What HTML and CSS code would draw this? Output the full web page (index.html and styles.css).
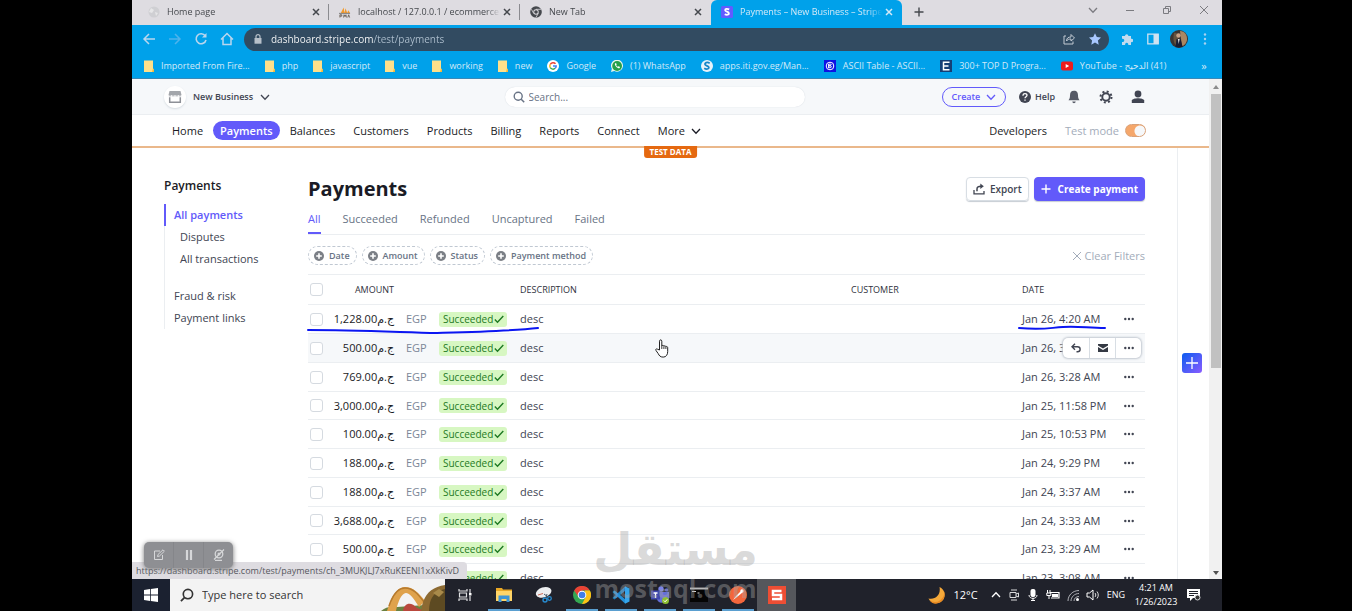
FILE: index.html
```html
<!DOCTYPE html>
<html lang="en">
<head>
<meta charset="utf-8">
<title>Payments – New Business – Stripe</title>
<link rel="stylesheet" href="styles.css">
</head>
<body>
<svg class="sprite" aria-hidden="true">
  <symbol id="x" viewBox="0 0 10 10"><path d="M2 2l6 6M8 2l-6 6" stroke="currentColor" stroke-width="1.5" fill="none"/></symbol>
  <symbol id="chev" viewBox="0 0 10 10"><path d="M1 3l4 4.200L9 3" stroke="currentColor" stroke-width="1.300" fill="none"/></symbol>
  <symbol id="plus" viewBox="0 0 10 10"><path d="M5 .5v9M.5 5h9" stroke="currentColor" stroke-width="1.400" fill="none"/></symbol>
  <symbol id="folder" viewBox="0 0 10 12"><path d="M0 .5h9v8l1 1V12H0z" fill="#ffe08a"/><path d="M9 8.500l1 1V12H8z" fill="#f5b73b"/></symbol>
  <symbol id="addc" viewBox="0 0 10 10"><circle cx="5" cy="5" r="5" fill="#7b7f86"/><path d="M5 2.200v5.600M2.200 5h5.600" stroke="#fff" stroke-width="1.600"/></symbol>
  <symbol id="tick" viewBox="0 0 10 10"><path d="M.8 5.500l2.700 2.700L9.300 2" stroke="currentColor" stroke-width="1.400" fill="none"/></symbol>
  <symbol id="dots" viewBox="0 0 10 4"><g fill="#414552"><circle cx="1.300" cy="2" r="1.200"/><circle cx="5" cy="2" r="1.200"/><circle cx="8.700" cy="2" r="1.200"/></g></symbol>
  <symbol id="mag" viewBox="0 0 12 12"><circle cx="5.200" cy="5.200" r="4" stroke="currentColor" stroke-width="1.400" fill="none"/><path d="M8.200 8.200l3 3" stroke="currentColor" stroke-width="1.500"/></symbol>
</svg>
<div class="screen">
  <header class="tabs">
    <div class="tab"><svg class="i12" viewBox="0 0 12 12"><circle cx="6" cy="6" r="5.500" fill="#cfcfd3"/><path d="M3 2l3 2-2 3-3-1M7 6l3 1-2 3" fill="#e6e6e8"/></svg><span class="title">Home page</span><button class="ic" aria-label="Close tab"><svg class="i10"><use href="#x"/></svg></button></div>
    <div class="tab"><svg class="i12" viewBox="0 0 13 12"><path d="M2 7L5 1l1 6zM6 7l1-5 2 5zM9 7l1-3 2 3z" fill="#f39a2b"/><path d="M0 7.500h12" stroke="#777" /><path d="M1 12V9h2v1.500H1M5 12l.5-3 1 2 1-2 .5 3M9.500 12l1-3 1 3" stroke="#6b6358" fill="none"/></svg><span class="title">localhost / 127.0.0.1 / ecommerce</span><button class="ic" aria-label="Close tab"><svg class="i10"><use href="#x"/></svg></button></div>
    <div class="tab"><svg class="i12" viewBox="0 0 12 12"><circle cx="6" cy="6" r="5.800" fill="#45484d"/><circle cx="6" cy="6" r="2.700" fill="#dedce1"/><circle cx="6" cy="6" r="1.800" fill="#45484d"/><path d="M6 3.300h5M3.700 7.400L1.400 3.200M8.300 7.400L5.800 11.600" stroke="#dedce1" stroke-width=".8"/></svg><span class="title">New Tab</span><button class="ic" aria-label="Close tab"><svg class="i10"><use href="#x"/></svg></button></div>
    <div class="tab active"><svg class="i12" viewBox="0 0 12 12"><rect width="12" height="12" rx="1.500" fill="#635bff"/><path d="M8.200 3.400C6 2.400 4 2.800 4.200 4.300c.2 1.400 3.600 1.300 3.700 2.900.1 1.700-2.200 2-4.200 1" stroke="#fff" stroke-width="1.800" fill="none"/></svg><span class="title">Payments – New Business – Stripe</span><button class="ic" aria-label="Close tab"><svg class="i10"><use href="#x"/></svg></button></div>
    <button class="ic newtab" aria-label="New tab"><svg class="i10"><use href="#plus"/></svg></button>
    <div class="winctl">
      <button class="ic" aria-label="Search tabs"><svg class="i10"><use href="#chev"/></svg></button>
      <button class="ic" aria-label="Minimize"><svg class="i10" viewBox="0 0 10 10"><path d="M1 5.500h8" stroke="currentColor"/></svg></button>
      <button class="ic" aria-label="Restore"><svg class="i10" viewBox="0 0 10 10"><path d="M1.500 3.500h5v5h-5zM3.500 3.500v-2h5v5h-2" stroke="currentColor" fill="none"/></svg></button>
      <button class="ic" aria-label="Close"><svg class="i10" viewBox="0 0 10 10"><path d="M1 1l8 8M9 1L1 9" stroke="currentColor"/></svg></button>
    </div>
  </header>
  <div class="toolbar">
    <button class="ic" aria-label="Back"><svg class="i14" viewBox="0 0 14 14"><path d="M13 7H2M7 2L2 7l5 5" stroke="#b9d6ee" stroke-width="1.500" fill="none"/></svg></button>
    <button class="ic" aria-label="Forward"><svg class="i14" viewBox="0 0 14 14"><path d="M1 7h11M7 2l5 5-5 5" stroke="#4fb3ec" stroke-width="1.500" fill="none"/></svg></button>
    <button class="ic" aria-label="Reload"><svg class="i14" viewBox="0 0 14 14"><path d="M11.200 3.800A5 5 0 1 0 12 8" stroke="#b9d6ee" stroke-width="1.600" fill="none"/><path d="M12.500 1v4.500H8z" fill="#b9d6ee"/></svg></button>
    <button class="ic" aria-label="Home"><svg class="i14" viewBox="0 0 14 14"><path d="M1 7.500L7 1.500l6 6M3 6v6.500h8V6" stroke="#b9d6ee" stroke-width="1.500" fill="none"/></svg></button>
    <div class="omni">
      <svg class="i10" viewBox="0 0 10 10"><rect x="1.500" y="4" width="7" height="5.700" fill="#b7c0c9"/><path d="M3 4V2.600a2 2 0 0 1 4 0V4" stroke="#b7c0c9" stroke-width="1.200" fill="none"/></svg>
      <input class="url" aria-label="Address" value="dashboard.stripe.com/test/payments">
      <button class="ic" aria-label="Share"><svg class="i12" viewBox="0 0 12 12"><path d="M3 3H1v8h9V8.500" stroke="#c2cad2" fill="none"/><path d="M3.500 8C3.500 5 5.500 4 8 4V1.500L11.500 5 8 8V6C6 6 4.500 6.500 3.500 8z" stroke="#c2cad2" fill="none"/></svg></button>
      <button class="ic" aria-label="Bookmark"><svg class="i12" viewBox="0 0 12 12"><path d="M6 .2l1.800 3.900 4.200.5-3.100 2.900.8 4.200L6 9.600l-3.700 2.100.8-4.200L0 4.600l4.200-.5z" fill="#a9c8ff"/></svg></button>
    </div>
    <button class="ic" aria-label="Extensions"><svg class="i12" viewBox="0 0 12 12"><path d="M1 3h3a1.700 1.700 0 1 1 3.400 0H10v2.800a1.700 1.700 0 1 1 0 3.300V12H7.200a1.600 1.600 0 1 0-3 0H1V9a1.700 1.700 0 1 0 0-3.200z" fill="#c4dbee"/></svg></button>
    <button class="ic" aria-label="Side panel"><svg class="i12" viewBox="0 0 12 12"><path d="M.8 1.200h10.400v9.600H.8z" stroke="#cfe2f1" stroke-width="1.300" fill="none"/><path d="M6.500 1h5v10h-5z" fill="#cfe2f1"/></svg></button>
    <button class="ic" aria-label="Profile"><svg class="i18" viewBox="0 0 18 18"><circle cx="9" cy="9" r="9" fill="#3a3431"/><path d="M10 1c5 0 7 4 7 8s-3 7-5 7z" fill="#a98762"/><path d="M4 3c2-1 4 1 4 4l-1 9c-4-2-4-9-3-13z" fill="#65533f"/><circle cx="8.500" cy="5.500" r="2.200" fill="#c9a184"/><path d="M5.500 17l1-8 2 1 2-1 2 7.500c-3 1.300-5 1-7 .5z" fill="#171d33"/><path d="M8 9l.7 5 .9-5z" fill="#eee"/></svg></button>
    <button class="ic" aria-label="Menu"><svg class="i12" viewBox="0 0 12 12"><g fill="#a9d2f0"><circle cx="6" cy="1.500" r="1.200"/><circle cx="6" cy="6" r="1.200"/><circle cx="6" cy="10.500" r="1.200"/></g></svg></button>
  </div>
  <nav class="marks" aria-label="Bookmarks">
    <a href="#"><svg class="fold"><use href="#folder"/></svg>Imported From Fire...</a>
    <a href="#"><svg class="fold"><use href="#folder"/></svg>php</a>
    <a href="#"><svg class="fold"><use href="#folder"/></svg>javascript</a>
    <a href="#"><svg class="fold"><use href="#folder"/></svg>vue</a>
    <a href="#"><svg class="fold"><use href="#folder"/></svg>working</a>
    <a href="#"><svg class="fold"><use href="#folder"/></svg>new</a>
    <a href="#"><svg class="i12" viewBox="0 0 12 12"><circle cx="6" cy="6" r="6" fill="#fff"/><g fill="none" stroke-width="1.500"><path d="M8.500 3.800A3.200 3.200 0 0 0 3.200 4.500" stroke="#ea4335"/><path d="M3.200 4.500a3.200 3.200 0 0 0 0 3" stroke="#fbbc05"/><path d="M3.200 7.500a3.200 3.200 0 0 0 5 .8" stroke="#34a853"/><path d="M8.200 8.300A3 3 0 0 0 9.200 6H6" stroke="#4285f4"/></g></svg>Google</a>
    <a href="#"><svg class="i12" viewBox="0 0 12 12"><path d="M0 12l.9-3.200A6 6 0 1 1 3.300 11z" fill="#e8f6ea"/><circle cx="6.100" cy="6" r="4.900" fill="#25a04b"/><path d="M4 3.500c-.9 1.500 2.500 5.200 4.500 4.800l.6-1.300-1.600-.8-.7.600C6 6.500 5.500 6 5.200 5.200l.5-.7L5 3z" fill="#fff"/></svg>(1) WhatsApp</a>
    <a href="#"><svg class="i12" viewBox="0 0 12 12"><circle cx="6" cy="6" r="6" fill="#e7f2fa"/><path d="M8.700 3.200C6 1.500 3.500 3 4 4.600c.5 1.500 3.800 1.200 3.900 2.900.1 1.500-2.500 2.200-4.700.8" stroke="#1586c8" stroke-width="1.700" fill="none"/></svg>apps.iti.gov.eg/Man...</a>
    <a href="#"><svg class="i12" viewBox="0 0 12 12"><path d="M0 0h12v12H0z" fill="#0d12e4"/><circle cx="6" cy="6" r="3.800" stroke="#fff" fill="none"/><path d="M4.600 4v4M4.600 4.200c4-.5 3 1.500.5 1.600 3 0 3.400 2-.5 2" stroke="#fff" fill="none"/></svg>ASCII Table - ASCII...</a>
    <a href="#"><svg class="i12" viewBox="0 0 12 12"><path d="M0 0h12v12H0z" fill="#153f75"/><path d="M9.500 2.300H3.500v7.400h6M3.500 6h5" stroke="#fff" stroke-width="1.500" fill="none"/></svg>300+ TOP D Progra...</a>
    <a href="#"><svg class="i12" viewBox="0 0 12 12"><rect y="1.500" width="12" height="9" rx="2" fill="#ee1c1c"/><path d="M4.700 4l3.500 2-3.500 2z" fill="#fff"/></svg><span>YouTube - <bdi>الدحيح</bdi> (41)</span></a>
    <button class="ic more" aria-label="More bookmarks">»</button>
  </nav>

  <main class="viewport">
    <div class="page">
      <div class="topbar">
        <button class="biz"><span class="shop"><svg class="i14" viewBox="0 0 14 14"><path d="M1.500 1h11L13.500 5h-13z" fill="#a3a6ab"/><path d="M1.700 7.200v5h10.600v-5" stroke="#8d9097" stroke-width="1.500" fill="none"/><path d="M.8 5.800h12.400" stroke="#a3a6ab" stroke-dasharray="2.500 .8"/></svg></span>New Business<svg class="i10"><use href="#chev"/></svg></button>
        <label class="search"><svg class="i12"><use href="#mag"/></svg><input type="search" placeholder="Search..." aria-label="Search"></label>
        <div class="tools">
          <button class="create">Create<svg class="i10"><use href="#chev"/></svg></button>
          <button class="help"><svg class="i12" viewBox="0 0 12 12"><circle cx="6" cy="6" r="6" fill="#414552"/><path d="M4 4.700c0-3 4-2.500 4-.4C8 5.700 6 5.800 6 7.300M6 8.400v1.400" stroke="#fff" stroke-width="1.300" fill="none"/></svg>Help</button>
          <button class="ic" aria-label="Notifications"><svg class="i14" viewBox="0 0 14 14"><path d="M7 .8c3 0 4 2 4 4.500 0 2.500.5 3.700 1.500 4.900h-11C2.500 9 3 7.800 3 5.300 3 2.800 4 .8 7 .8zM5.300 11.500h3.400C8.500 13.800 5.500 13.800 5.300 11.500z" fill="#565a66"/></svg></button>
          <button class="ic" aria-label="Settings"><svg class="i14" viewBox="0 0 14 14"><circle cx="7" cy="7" r="3.700" stroke="#414552" stroke-width="1.900" fill="none"/><circle cx="7" cy="7" r="5.500" stroke="#414552" stroke-width="2" stroke-dasharray="2 2.320" fill="none"/></svg></button>
          <button class="ic" aria-label="Account"><svg class="i14" viewBox="0 0 14 14"><circle cx="7" cy="4" r="3.400" fill="#414552"/><path d="M.8 13V10.500C1 9 4.500 8.200 7 8.200s6 .8 6.200 2.300V13z" fill="#414552"/></svg></button>
        </div>
      </div>
      <nav class="nav" aria-label="Main">
        <a href="#">Home</a><a href="#" class="on">Payments</a><a href="#">Balances</a><a href="#">Customers</a><a href="#">Products</a><a href="#">Billing</a><a href="#">Reports</a><a href="#">Connect</a><a href="#">More<svg class="i10"><use href="#chev"/></svg></a>
        <a href="#" class="dev">Developers</a>
        <label class="mode">Test mode<input type="checkbox" role="switch" checked></label>
        <span class="testdata">TEST DATA</span>
      </nav>
      <div class="cols">
        <aside class="side">
          <h2>Payments</h2>
          <ul>
            <li class="cur"><a href="#">All payments</a></li>
            <li class="sub"><a href="#">Disputes</a></li>
            <li class="sub"><a href="#">All transactions</a></li>
            <li class="grp"><a href="#">Fraud &amp; risk</a></li>
            <li><a href="#">Payment links</a></li>
          </ul>
        </aside>
        <section class="content">
          <div class="head">
            <h1>Payments</h1>
            <button class="btn"><svg class="i12" viewBox="0 0 12 12"><path d="M1 7v3.800h10V8" stroke="#414552" stroke-width="1.300" fill="none"/><path d="M4 8.200V6c0-2 1.500-2.700 4-2.700" stroke="#414552" stroke-width="1.500" fill="none"/><path d="M7.300.5l3.500 2.800-3.500 2.800z" fill="#414552"/></svg>Export</button>
            <button class="btn primary"><svg class="i10"><use href="#plus"/></svg>Create payment</button>
          </div>
          <div class="subtabs"><a href="#" class="on">All</a><a href="#">Succeeded</a><a href="#">Refunded</a><a href="#">Uncaptured</a><a href="#">Failed</a></div>
          <div class="filters">
            <button class="chip"><svg class="i10"><use href="#addc"/></svg>Date</button>
            <button class="chip"><svg class="i10"><use href="#addc"/></svg>Amount</button>
            <button class="chip"><svg class="i10"><use href="#addc"/></svg>Status</button>
            <button class="chip"><svg class="i10"><use href="#addc"/></svg>Payment method</button>
            <button class="clear"><svg class="i10" viewBox="0 0 10 10"><path d="M1 1l8 8M9 1L1 9" stroke="currentColor"/></svg>Clear Filters</button>
          </div>
          <table>
            <colgroup><col class="c-check"><col class="c-amt"><col class="c-cur"><col class="c-stat"><col><col class="c-cust"><col class="c-date"><col class="c-act"></colgroup>
            <thead><tr><th><input type="checkbox" aria-label="Select all"></th><th class="amt-head">AMOUNT</th><th></th><th></th><th>DESCRIPTION</th><th>CUSTOMER</th><th>DATE</th><th></th></tr></thead>
            <tbody id="rows"></tbody>
          </table>
        </section>
      </div>
      <aside class="rail"><button aria-label="Add"><svg class="i14" viewBox="0 0 14 14"><path d="M7 1v12M1 7h12" stroke="#fff" stroke-width="1.300"/></svg></button></aside>
      <svg class="ink ink-a" viewBox="0 0 232 8"><path d="M1 3C45 3 90 5 130 6 165 5 205 4 231 1" stroke="#0b16f2" stroke-width="2" fill="none" stroke-linecap="round"/></svg>
      <svg class="ink ink-b" viewBox="0 0 88 6"><path d="M1 3C25 5 30 3 45 2 60 1 70 3 87 3" stroke="#0b16f2" stroke-width="2" fill="none" stroke-linecap="round"/></svg>
      <svg class="cursor" viewBox="0 0 14 19"><path d="M4.500 11V2.200c0-1.800 2.300-1.800 2.300 0V7c.3-1 2-.8 2.100.3.400-.8 1.900-.6 2 .5.500-.7 1.800-.3 1.800.8v4c0 3-1.500 5.500-4.500 5.500-3 0-4-1.500-5-3.500L1 11.500c-.8-1.400.8-2.300 1.700-1.200z" fill="#fff" stroke="#222" stroke-width="1"/><path d="M6.800 7v3M8.900 7.500V10M10.900 8v2" stroke="#222" stroke-width=".9"/></svg>
    </div>
    <div class="scroll"><span class="up"></span><span class="thumb"></span><span class="down"></span></div>
    <div class="recorder">
      <button class="ic" aria-label="Draw"><svg class="i12" viewBox="0 0 12 12"><path d="M7 2H1.500v8.500h8V6M4.500 7.500l.5-2L10 .8l1.400 1.400L6.500 7z" stroke="#d6d7d9" fill="none"/></svg></button>
      <button class="ic" aria-label="Pause"><svg class="i12" viewBox="0 0 12 12"><path d="M4 1v10M8 1v10" stroke="#d6d7d9" stroke-width="2.200"/></svg></button>
      <button class="ic" aria-label="Camera off"><svg class="i12" viewBox="0 0 12 12"><circle cx="6" cy="5" r="3.800" stroke="#d6d7d9" stroke-width="1.300" fill="none"/><circle cx="6" cy="5" r="1.500" fill="#d6d7d9"/><path d="M2 11.300h7M1 10.500L11 .5" stroke="#d6d7d9" stroke-width="1.200"/></svg></button>
    </div>
    <div class="status">https://dashboard.stripe.com/test/payments/ch_3MUKJLJ7xRuKEENI1xXkKivD</div>
  </main>

  <footer class="taskbar">
    <button class="start" aria-label="Start"><svg class="i14" viewBox="0 0 14 14"><path d="M0 2l6-.9v5.500H0zM6.800 1L14 0v6.600H6.800zM0 7.400h6v5.500L0 12zM6.800 7.400H14V14l-7.200-1z" fill="#fff"/></svg></button>
    <label class="find"><svg class="i14 flip" viewBox="0 0 12 12"><use href="#mag"/></svg><input placeholder="Type here to search" aria-label="Type here to search">
      <svg class="basket" viewBox="0 0 64 32"><path d="M0 32c4-4 10-5 16-4l28-2 20-2v8z" fill="#6b8140"/><path d="M6 32C10 18 16 8 24 8s14 6 20 14l-6 6c-5-8-9-14-13-14s-8 8-10 18z" fill="#dfa24c"/><path d="M8 27c4-12 9-18 16-18 8 0 13 6 19 14" stroke="#b67a2e" stroke-width="1.500" fill="none"/><path d="M22 32c1-8 8-10 14-3l8 3z" fill="#b9473c"/><path d="M40 32c2-16 10-24 24-26v26z" fill="#8c6a32"/><path d="M48 32c0-12 5-20 16-22v22z" fill="#5d4a22"/><path d="M52 14l6-4 5 3-5 5z" fill="#a98a4a"/></svg></label>
    <div class="apps">
      <button aria-label="Task view"><svg class="i14" viewBox="0 0 14 14"><path d="M1 1v2h8V1M1 13v-2h8v2M1.500 5h7v4h-7zM12 1v4M12 8v5" stroke="#dfe0e2" stroke-width="1.200" fill="none"/><path d="M11 5h2.500v2.500H11z" fill="#fff"/></svg></button>
      <button class="open" aria-label="File Explorer"><svg class="i18" viewBox="0 0 18 18"><path d="M1 2h6l1 1.500h9V15H1z" fill="#e9a825"/><path d="M1 5h16v10H1z" fill="#ffd567"/><path d="M3.500 16V9.500h11V16h-3v-3h-5v3z" fill="#3f95d3"/></svg></button>
      <button aria-label="Snipping Tool"><svg class="i18" viewBox="0 0 18 18"><ellipse cx="9.500" cy="6.500" rx="8" ry="5" fill="#eceef0" transform="rotate(-18 9 6)"/><path d="M4 9l5-1.500" stroke="#d06a57"/><circle cx="11" cy="14" r="2" stroke="#278bd0" stroke-width="1.400" fill="none"/><circle cx="15.500" cy="12.500" r="1.800" stroke="#278bd0" stroke-width="1.300" fill="none"/><path d="M12 12l1-4M14 11L10 8" stroke="#4b5966"/></svg></button>
      <button class="open" aria-label="Chrome"><svg class="i18" viewBox="0 0 20 20"><circle cx="10" cy="10" r="10" fill="#35a852"/><path d="M1.300 5A10 10 0 0 1 18.700 5H10L6 12z" fill="#ea4335"/><path d="M18.700 5A10 10 0 0 1 10 20l4.300-8L13 5z" fill="#fbc116"/><circle cx="10" cy="10" r="4.800" fill="#fff"/><circle cx="10" cy="10" r="3.700" fill="#3f7ee8"/></svg></button>
      <button class="open" aria-label="Visual Studio Code"><svg class="i18" viewBox="0 0 18 18"><path d="M13 .5v4.500L2.500 13.500.5 12z" fill="#1b7fc4"/><path d="M13 17.500V13L2.500 4.500.5 6z" fill="#2490d8"/><path d="M13 .3l4.500 2.200v13L13 17.700z" fill="#35a5ec"/></svg></button>
      <button class="open" aria-label="Teams"><svg class="i18" viewBox="0 0 18 18"><circle cx="10" cy="3" r="2.700" fill="#7b83eb"/><circle cx="15.500" cy="4" r="1.800" fill="#5059c9"/><path d="M6 6h12v6c0 3-3 4-4 3-1 2-7 3-8-2z" fill="#656fd8"/><path d="M0 4.500h9v9H0z" fill="#4048ae"/><path d="M2.500 7h4M4.500 7v5" stroke="#fff" stroke-width="1.300"/><circle cx="14.500" cy="14.500" r="3.500" fill="#8ebf32"/><path d="M12.800 14.500l1.300 1.300 2.200-2.500" stroke="#fff" fill="none"/></svg></button>
      <button class="open" aria-label="Command Prompt"><svg class="i18" viewBox="0 0 18 18"><path d="M0 1.500h18V16H0z" fill="#050505"/><path d="M0 1.500h18v2H0z" fill="#b9babc"/><path d="M2 5.500h4M7.500 7h2" stroke="#d5d5d5"/></svg></button>
      <button class="open" aria-label="Postman"><svg class="i18" viewBox="0 0 18 18"><circle cx="9" cy="9" r="9" fill="#f3663c"/><path d="M4 14l3-4 5-5 1.500 1.500L8 11z" fill="#fff"/><circle cx="13" cy="5" r="1.700" fill="#fff"/></svg></button>
      <button class="front" aria-label="Snagit"><svg class="i18" viewBox="0 0 18 18"><path d="M0 0h18v18H0z" fill="#ee4e34"/><path d="M13.500 5H5v4h8v4H4" stroke="#fff" stroke-width="2.500" fill="none"/></svg></button>
    </div>
    <div class="tray">
      <svg class="i18" viewBox="0 0 18 18"><path d="M11.500 1A8.500 8.500 0 1 1 .5 12.500C8 14 13 8.500 11.500 1z" fill="#f5a93a"/><path d="M15.500 4A9 9 0 0 1 1.500 14C4 19 12 19 15.500 13c1.500-3 1.500-6 0-9z" fill="#e98a22"/></svg>
      <span class="temp">12°C</span>
      <svg class="i10 flipv"><use href="#chev"/></svg>
      <svg class="i12" viewBox="0 0 12 12"><path d="M3 1h6M3 11h6M2 3.500h6v5H2zM8 5l2.500-1v4L8 7" stroke="#d9dadc" fill="none"/></svg>
      <svg class="i12" viewBox="0 0 12 12"><rect x="3.500" width="5" height="8" rx="2" fill="#fff"/><path d="M2 6c0 4.500 8 4.500 8 0M6 9v3M4 11.500h4" stroke="#fff" fill="none"/></svg>
      <svg class="i14" viewBox="0 0 14 14"><path d="M4 4.500h9v5.500H5" stroke="#fff" stroke-width="1.200" fill="none"/><path d="M6 6h6v3H6z" fill="#fff"/><path d="M1.500 2v3M4 2v3M.8 5h4v2.500h-4zM3 8v3" stroke="#fff" fill="none"/></svg>
      <svg class="i12" viewBox="0 0 12 12"><g fill="none" stroke="#aeb0b5"><path d="M1 12C1 6 6 1.500 12 1.500"/><path d="M4 12c0-4 3.500-7.500 8-7.500M7 12c0-2.500 2-4.500 5-4.500"/></g><circle cx="10.500" cy="10.500" r="1.500" fill="#fff"/></svg>
      <svg class="i14" viewBox="0 0 14 14"><path d="M1 5h2.500L7 2v10L3.500 9H1z" stroke="#fff" fill="none"/><path d="M9 5c1 1 1 3 0 4M11 3.500c1.700 2 1.700 5 0 7" stroke="#ddd" fill="none"/></svg>
      <span class="lang">ENG</span>
      <span class="clock"><span>4:21 AM</span><span>1/26/2023</span></span>
      <svg class="i14" viewBox="0 0 14 14"><path d="M0 1h13v9H6l-3 3v-3H0z" fill="#fff"/><path d="M2 3.500h9M2 5.500h9M2 7.500h5" stroke="#20222b"/><circle cx="10.500" cy="9.500" r="2.500" stroke="#d7d8da" fill="#333"/></svg>
    </div>
  </footer>
  <div class="brand"><span class="brand-ar" lang="ar">مستقل</span><span class="brand-en">mostaql.com</span></div>
</div>
<script src="rows.js"></script>
</body>
</html>
```
FILE: styles.css
```css
* { box-sizing: border-box; }
body { margin: 0; background: #000; font: 11px/16px "Open Sans", "Noto Sans", "DejaVu Sans", sans-serif; color: #414552; }
a { color: inherit; text-decoration: none; }
button, input { font: inherit; color: inherit; }
button { border: 0; background: none; padding: 0; display: inline-flex; align-items: center; justify-content: center; white-space: nowrap; }
svg { flex: none; display: block; }
.sprite { display: none; }
.i10 { width: 10px; height: 10px; }
.i12 { width: 12px; height: 12px; }
.i14 { width: 14px; height: 14px; }
.i18 { width: 18px; height: 18px; }
.flip { transform: scaleX(-1); }
.flipv { transform: scaleY(-1); }

.screen { position: relative; margin: 0 130px 0 132px; height: 100vh; display: flex; flex-direction: column; background: #fff; overflow: hidden; }

/* browser chrome */
.tabs { display: flex; height: 25px; padding-left: 6px; background: #dedce1; color: #45484d; }
.tab { flex: 0 1 191px; min-width: 0; display: flex; align-items: center; gap: 7px; padding: 0 7px 2px 10px; border-right: 1px solid transparent; position: relative; }
.tab:nth-child(-n+2)::after { content: ""; position: absolute; right: -1px; top: 4px; height: 16px; width: 1px; background: #8b8b90; }
.title { flex: 1; overflow: hidden; white-space: nowrap; font-size: 9px; -webkit-mask-image: linear-gradient(90deg, #000 90%, transparent); mask-image: linear-gradient(90deg, #000 90%, transparent); }
.tab.active { background: #00a1ea; color: #d3e9f7; border-radius: 6px 6px 0 0; }
.tab .ic { margin-left: -5px; }
.newtab { width: 34px; padding-bottom: 2px; }
.winctl { margin-left: auto; display: flex; color: #7b7b80; }
.winctl .ic { width: 37px; padding-bottom: 6px; }
.toolbar { display: flex; align-items: center; height: 28px; padding: 0 4px; background: #00a1ea; }
.toolbar > .ic { width: 26px; }
.omni { flex: 1; display: flex; align-items: center; height: 23px; margin: 0 5px 0 4px; padding: 0 1px 0 9px; border-radius: 12px; background: #324b61; }
.omni .ic { width: 26px; }
.url { flex: 1; min-width: 0; border: 0; outline: 0; padding: 0 0 0 8px; font-size: 10px; color: #fff; background: linear-gradient(90deg, #fff 110px, #aebfce 110px); -webkit-background-clip: text; background-clip: text; -webkit-text-fill-color: transparent; }
.marks { display: flex; align-items: center; height: 26px; padding: 0 8px 0 12px; gap: 15px; background: #00a1ea; color: #d3e9f7; font-size: 9px; border-bottom: 1px solid #3a89b8; }
.marks a { display: flex; align-items: center; gap: 7px; white-space: nowrap; }
.fold { width: 10px; height: 12px; }
.more { margin-left: auto; width: 20px; font-size: 11px; }

/* dashboard */
.viewport { flex: 1; min-height: 0; position: relative; display: flex; overflow: hidden; }
.page { flex: 1; min-width: 0; position: relative; }
.topbar { display: grid; grid-template-columns: 1fr 300px 1fr; align-items: center; height: 36px; padding: 0 64px 0 32px; background: #f6f8fa; border-bottom: 1px solid #ebeef1; }
.biz { justify-self: start; gap: 7px; font-size: 9px; font-weight: 600; }
.shop { width: 22px; height: 22px; border-radius: 50%; background: #fff; display: grid; place-items: center; box-shadow: 0 1px 2px #d5dbe1; }
.search { display: flex; align-items: center; gap: 4px; height: 20px; padding: 0 8px; border-radius: 10px; background: #fff; color: #687385; box-shadow: 0 0 1px #c9d0d8; }
.search input { border: 0; outline: 0; padding: 0; min-width: 0; flex: 1; background: none; font-size: 10px; }
input::placeholder { color: inherit; opacity: 1; }
.tools { justify-self: end; display: flex; align-items: center; gap: 18px; font-size: 9px; }
.create { height: 20px; width: 64px; gap: 6px; border: 1px solid #625afa; border-radius: 10px; color: #625afa; font-weight: 600; }
.help { gap: 4px; font-weight: 600; margin-left: -5px; margin-right: -6px; }
.nav { position: relative; display: flex; align-items: center; gap: 2px; height: 33px; padding: 0 63px 0 32px; border-bottom: 2px solid #eab88b; color: #1a1b25; }
.nav a { display: flex; align-items: center; gap: 6px; height: 19px; padding: 0 8px; border-radius: 10px; font-weight: 500; }
.nav a.on { background: #625afa; color: #fff; font-weight: 600; font-size: 10px; }
.nav a.on { font-size: 11px; padding: 0 7px; }
.nav .dev { margin-left: auto; }
.mode { display: flex; align-items: center; gap: 6px; padding-left: 8px; color: #a3acba; font-weight: 500; }
.mode input { appearance: none; margin: 0; width: 21px; height: 13px; border-radius: 7px; background: radial-gradient(circle at 14px 6px, #f6f8fa 5px, #f5a76b 6px); border: 1px solid #d9a27a; }
.testdata { position: absolute; left: 50%; top: 31px; transform: translateX(-50%); background: #e56910; color: #fff; font-size: 8px; line-height: 12px; font-weight: 700; padding: 0 6px; border-radius: 0 0 3px 3px; }
.cols { display: grid; grid-template-columns: 144px 1fr; padding: 0 64px 0 32px; }
.side { padding-top: 30px; }
.side h2 { margin: 0 0 10px; font-size: 12px; line-height: 16px; color: #1a1b25; font-weight: 600; }
.side ul { margin: 0 30px 0 0; padding: 0; list-style: none; }
.side li { border-left: 1px solid #ebeef1; padding: 3px 0 3px 9px; }
.side .cur { border-left: 2px solid #625afa; padding-left: 8px; color: #625afa; font-weight: 600; }
.side li.sub { padding-left: 15px; }
.side .grp { padding-top: 18px; }
.content { padding-top: 27px; min-width: 0; }
.head { display: flex; align-items: center; gap: 5px; height: 28px; }
h1 { flex: 1; margin: 0; font-size: 20px; line-height: 28px; color: #1a1b25; font-weight: 700; }
.btn { height: 24px; padding: 0 6px; gap: 5px; border-radius: 4px; border: 1px solid #d8dee4; box-shadow: 0 1px 1px #c6ccd3; font-size: 10px; font-weight: 600; }
.primary { background: #625afa; border-color: #625afa; color: #fff; gap: 7px; font-weight: 700; }
.subtabs { display: flex; gap: 22px; margin-top: 8px; border-bottom: 1px solid #ebeef1; color: #687385; font-weight: 500; }
.subtabs a { padding: 0 0 5px; border-bottom: 2px solid transparent; }
.subtabs .on { color: #625afa; border-color: #625afa; }
.filters { display: flex; gap: 5px; padding: 11px 0 9px; }
.chip { height: 19px; padding: 0 6px 0 5px; gap: 5px; border: 1px dashed #c0c8d2; border-radius: 10px; color: #687385; font-size: 9px; font-weight: 600; }
.clear { margin-left: auto; gap: 3px; color: #a3acba; font-weight: 500; }
table { width: 100%; table-layout: fixed; border-collapse: collapse; border-top: 1px solid #ebeef1; }
.c-check { width: 18px; } .c-amt { width: 68px; } .c-cur { width: 45px; } .c-stat { width: 81px; }
.c-cust { width: 171px; } .c-date { width: 90px; } .c-act { width: 33px; }
th, td { padding: 0; text-align: left; white-space: nowrap; border-bottom: 1px solid #ebeef1; }
thead tr { height: 30px; }
th { font-size: 9px; font-weight: 500; color: #30313d; }
tbody tr { height: 29px; }
tbody tr:nth-child(4n) { height: 28px; }
.hover td { background: #f6f8fa; }
.amt-head { text-align: right; }
.amt { text-align: right; color: #1a1b25; font-weight: 500; }
.cur-cell { padding-left: 12px; color: #7c8798; }
td input, th input { appearance: none; display: block; margin: 0 0 0 2px; width: 13px; height: 13px; border: 1px solid #d5dae0; border-radius: 3px; background: #fff; }
.badge { display: inline-flex; align-items: center; gap: 1px; height: 15px; padding: 0 3px 0 4px; border-radius: 3px; background: #d7f7c2; color: #1e7a22; font-size: 10px; font-weight: 500; }
.act { position: relative; }
.dots { width: 10px; height: 4px; margin-left: 12px; }
.pop { position: absolute; right: 4px; top: 4px; display: flex; height: 20px; border-radius: 5px; background: #fff; box-shadow: 0 0 2px 1px #c3c9d1; }
.pop button { width: 26px; }
.pop button + button { border-left: 1px solid #d8dee4; }
.pop .dots { margin: 0; }
.rail { position: absolute; right: 0; top: 69px; bottom: 0; width: 32px; border-left: 1px solid #ebeef1; }
.rail button { position: absolute; top: 205px; left: 4px; width: 20px; height: 20px; border-radius: 3px; background: linear-gradient(135deg, #0b5cf0, #8a5cff); }
.ink, .cursor { position: absolute; }
.ink-a { left: 175px; top: 248px; width: 232px; height: 8px; }
.ink-b { right: 103px; top: 246px; width: 88px; height: 6px; }
.cursor { left: 523px; top: 260px; width: 14px; height: 19px; }
.scroll { width: 13px; display: flex; flex-direction: column; align-items: center; background: #f1f1f1; padding: 6px 0 4px; }
.up, .down { border: 3px solid transparent; }
.up { border-top: 0; border-bottom: 4px solid #8b8b8b; }
.down { border-bottom: 0; border-top: 4px solid #505050; margin-top: auto; }
.thumb { flex: 0 0 56%; width: 10px; margin-top: 5px; background: #c1c1c1; }
.recorder { position: absolute; left: 12px; bottom: 11px; z-index: 2; display: flex; height: 26px; width: 89px; border-radius: 5px; background: #8e8f93; box-shadow: 0 1px 5px #777; }
.recorder .ic { flex: 1; }
.recorder .ic + .ic { border-left: 1px solid #85868a; }
.status { position: absolute; left: 0; bottom: 0; height: 17px; padding: 0 8px 0 4px; border-radius: 0 4px 0 0; background: #dedce1; color: #56585e; font-size: 9px; line-height: 17px; white-space: nowrap; }

/* taskbar */
.taskbar { display: flex; height: 32px; background: #20222b; color: #fff; }
.start { width: 38px; background: #1b2130; }
.find { position: relative; flex: 0 1 275px; display: flex; align-items: center; gap: 8px; padding: 0 0 0 10px; background: #f3f3f3; color: #333; }
.find input { border: 0; outline: 0; background: none; padding: 0; min-width: 0; flex: 1; }
.basket { width: 64px; height: 32px; }
.apps { display: flex; }
.apps button { width: 39px; position: relative; }
.apps .open::after { content: ""; position: absolute; left: 4px; right: 3px; bottom: 0; height: 2px; background: #5a9fd0; }
.apps .front { background: #55575c; }
.tray { margin-left: auto; display: flex; align-items: center; gap: 7px; padding-right: 21px; }
.temp { margin-right: 6px; }
.lang { font-size: 9px; }
.clock { width: 48px; display: flex; flex-direction: column; align-items: center; font-size: 9px; line-height: 14px; }

.brand { position: absolute; left: 464px; bottom: 10px; width: 159px; display: flex; flex-direction: column; align-items: center; color: rgba(165, 165, 165, .42); font-weight: 700; pointer-events: none; white-space: nowrap; }
.brand-ar { font-family: "DejaVu Sans", sans-serif; font-size: 45px; line-height: 50px; }
.brand-en { font-size: 25px; line-height: 26px; }
```
FILE: rows.js
```js
const payments = [
  ["1,228.00", "Jan 26, 4:20 AM"],
  ["500.00", "Jan 26, 3"],
  ["769.00", "Jan 26, 3:28 AM"],
  ["3,000.00", "Jan 25, 11:58 PM"],
  ["100.00", "Jan 25, 10:53 PM"],
  ["188.00", "Jan 24, 9:29 PM"],
  ["188.00", "Jan 24, 3:37 AM"],
  ["3,688.00", "Jan 24, 3:33 AM"],
  ["500.00", "Jan 23, 3:29 AM"],
  ["500.00", "Jan 23, 3:08 AM"]
];
const dots = '<svg class="dots"><use href="#dots"/></svg>';
const pop = '<div class="pop"><button aria-label="Refund"><svg class="i10" viewBox="0 0 10 10"><path d="M4 .8L1 3.800l3 3M1 3.800h5.500c3.500 0 3.500 5 0 5H5.500" stroke="#414552" stroke-width="1.400" fill="none"/></svg></button><button aria-label="Send receipt"><svg class="i10" viewBox="0 0 10 10"><path d="M0 1h10v1.500L5 5.500 0 2.500zM0 4l5 3 5-3v5H0z" fill="#353a44"/></svg></button><button aria-label="More">' + dots + '</button></div>';
document.getElementById("rows").innerHTML = payments.map(([amount, date], i) => `
  <tr${i === 1 ? ' class="hover"' : ""}>
    <td><input type="checkbox" aria-label="Select payment ${i + 1}"></td>
    <td class="amt">${amount}ج.م</td>
    <td class="cur-cell">EGP</td>
    <td><span class="badge">Succeeded<svg class="i10"><use href="#tick"/></svg></span></td>
    <td>desc</td><td></td>
    <td>${date}</td>
    <td class="act">${i === 1 ? pop : dots}</td>
  </tr>`).join("");
```
